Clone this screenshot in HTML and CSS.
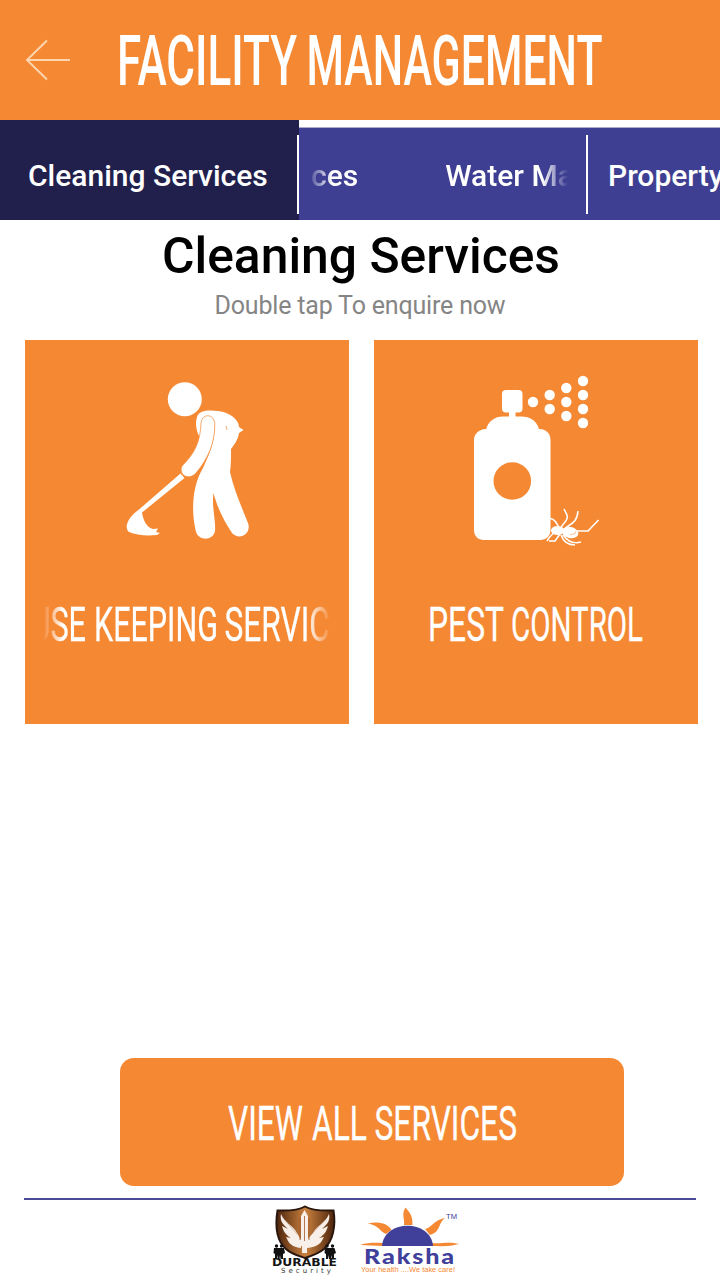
FILE: index.html
```html
<!DOCTYPE html>
<html lang="en">
<head>
  <meta charset="UTF-8">
  <meta name="viewport" content="width=device-width, initial-scale=1.0">
  <title>Facility Management</title>
  <link rel="stylesheet" href="styles.css">
</head>
<body>
  <div class="outer">

    <div class="header">
      <svg class="back" width="117" height="120" viewBox="0 0 117 120">
        <path d="M70 60H27M47 40.500L27 60L47 79.500"/>
      </svg>
      <svg class="caps title" width="603" height="120" viewBox="117 0 603 120">
        <text x="117" y="85" textLength="180" lengthAdjust="spacingAndGlyphs">FACILITY</text>
        <text x="306.500" y="85" textLength="296" lengthAdjust="spacingAndGlyphs">MANAGEMENT</text>
      </svg>
    </div>

    <div class="tabs">
      <div class="tab active">Cleaning Services</div>
      <div class="tab scrolling">
        <div class="marquee"><span>ces</span><span>Water Ma</span></div>
      </div>
      <div class="tab last">Property</div>
    </div>

    <h1 class="heading">Cleaning Services</h1>
    <p class="hint">Double tap To enquire now</p>

    <div class="cards">
      <div class="card">
        <!-- man with broom -->
        <svg width="324" height="240" viewBox="25 340 324 240" fill="#fff">
          <circle cx="184.800" cy="399.300" r="17"/>
          <path d="M197 417C199 410 209 410 218 411C230 412 239 420 239 427L243.500 430L239 433C238 440 234 445 231 449C231 458 231 465 230 472C234 490 242 508 248 523C252 534 239 541 232 533C224 521 217 507 213.500 493C211.500 506 216 521 215 531C213 541 199 541 196 532C191 512 192 486 203 468C211 451 216 438 214 421C212 415 204 415 202 421L200 438C196 431 195 423 197 417Z"/>
          <path d="M201 424C201 413 214.500 413 214.800 424C215 443 208 459 196 473C189 481 178 475 182 466C195 453 200 442 201 424Z" stroke="#f58833" stroke-width=".7"/>
          <path d="M180.500 473.500L184.500 478L142 512.500C143 520 147 528 153 529L158 528.500L156 532L160 533L157 535C146 536 136 535 129 532C124 528 127 518 139 509.500Z"/>
          <path d="M226 426L227 430" stroke="#f58833" stroke-width=".7"/>
        </svg>
        <svg class="caps fade" width="288" height="60" viewBox="43 595 288 60">
          <text x="30.500" y="641" textLength="55.500" lengthAdjust="spacingAndGlyphs">USE</text>
          <text x="94" y="641" textLength="124" lengthAdjust="spacingAndGlyphs">KEEPING</text>
          <text x="224.500" y="641" textLength="105.500" lengthAdjust="spacingAndGlyphs">SERVIC</text>
        </svg>
      </div>
      <div class="card">
        <!-- spray can and spider -->
        <svg width="324" height="240" viewBox="374 340 324 240" fill="#fff">
          <rect x="502" y="390" width="20.500" height="22.500" rx="4"/>
          <rect x="509" y="410" width="6.500" height="8"/>
          <path d="M486 430C488 421 495 416.500 503 416.500H521C530 416.500 537 421 539 429C546 429 550.500 433 550.500 440V530C550.500 536 546 540 540 540H484C478 540 474 536 474 530V440C474 434 479 429 486 429Z"/>
          <circle cx="512.300" cy="481" r="18.800" fill="#f58833"/>
          <circle cx="533" cy="402" r="5.200"/>
          <circle cx="549.700" cy="395" r="5.200"/><circle cx="549.700" cy="409" r="5.200"/>
          <circle cx="566.300" cy="388" r="5.200"/><circle cx="566.300" cy="402" r="5.200"/><circle cx="566.300" cy="416" r="5.200"/>
          <circle cx="583" cy="381" r="5.200"/><circle cx="583" cy="395" r="5.200"/><circle cx="583" cy="409" r="5.200"/><circle cx="583" cy="423" r="5.200"/>
          <ellipse cx="570" cy="532.500" rx="8.500" ry="5.500" transform="rotate(12 570 532.500)"/>
          <ellipse cx="557.500" cy="530.500" rx="6.500" ry="4.500"/>
          <path d="M561 528C563 522 569 521 567 515L564 509M565 529C568 524 577 525 578 511M574 531H588L598.500 520M559 530C558 522 554 519 549 518M558 531C553 532 550 536 547 541M560 534L555 541H549M563 535C568 542 574 544 581 542M561 535C563 541 568 545 575 545" fill="none" stroke="#fff" stroke-width="1.600"/>
          <path d="M570 535L575 533.500L576 531" fill="none" stroke="#f58833" stroke-width=".5"/>
        </svg>
        <svg class="caps" width="288" height="60" viewBox="392 595 288 60">
          <text x="428" y="641" textLength="76" lengthAdjust="spacingAndGlyphs">PEST</text>
          <text x="511" y="641" textLength="132" lengthAdjust="spacingAndGlyphs">CONTROL</text>
        </svg>
      </div>
    </div>

    <button class="all">
      <svg class="caps" width="504" height="128" viewBox="120 1058 504 128">
        <text x="228" y="1140" textLength="75" lengthAdjust="spacingAndGlyphs">VIEW</text>
        <text x="312" y="1140" textLength="55" lengthAdjust="spacingAndGlyphs">ALL</text>
        <text x="374.500" y="1140" textLength="142.500" lengthAdjust="spacingAndGlyphs">SERVICES</text>
      </svg>
    </button>

    <div class="footer">
      <svg width="72" height="76" viewBox="268 1202 72 76">
        <defs>
          <linearGradient id="shield">
            <stop offset="0" stop-color="#4d240c"/>
            <stop offset=".5" stop-color="#c9813f"/>
            <stop offset="1" stop-color="#4d240c"/>
          </linearGradient>
        </defs>
        <path d="M305 1206.500C311 1210 321 1211 333.500 1210.500C336 1226 333 1241 324 1249C318 1254 311 1256 305 1258C299 1256 291 1254 286 1249C277 1241 275 1226 277.500 1210.500C290 1211 299 1210 305 1206.500Z" fill="url(#shield)" stroke="#29170f" stroke-width="2"/>
        <g fill="#f7efe8">
          <path d="M281 1214C285 1224 293 1225 297 1233L301 1240V1248C289 1247 288 1240 286 1237L291 1238C284 1234 283 1229 282 1226L288 1229C281 1223 280 1219 281 1214Z"/>
          <path d="M329 1214C325 1224 317 1225 313 1233L307 1240V1248C321 1247 322 1240 324 1237L319 1238C326 1234 327 1229 328 1226L322 1229C329 1223 330 1219 329 1214Z"/>
          <path d="M304.500 1210L308 1216V1242H315L312 1246H307V1253H302V1246H297L294 1242H301V1216Z"/>
        </g>
        <path d="M304.500 1216V1241M300 1218V1240M309 1218V1240" stroke="#a0592d" stroke-width=".8"/>
        <path d="M285 1220L297 1234M325 1220L312 1234" stroke="#c79b7c" stroke-width=".6"/>
        <!-- guards on both sides -->
        <g fill="#111">
          <circle cx="276.500" cy="1246" r="1.700"/><circle cx="281.500" cy="1246" r="1.700"/>
          <path d="M274 1248H284L285 1253L283 1254V1259H280.500L280 1255L279.500 1259H278L277.500 1255L277 1259H275V1254L273.500 1253Z"/>
          <circle cx="327" cy="1246" r="1.700"/><circle cx="332.500" cy="1246" r="1.700"/>
          <path d="M325 1248H334.500L336 1253L334 1254V1259H332L331.500 1255L331 1259H329L328.500 1255L328 1259H326V1254L324.500 1253Z"/>
        </g>
        <text class="durable" x="272" y="1266" textLength="65" lengthAdjust="spacingAndGlyphs">DURABLE</text>
        <text class="security" x="281" y="1272.500" textLength="50">Security</text>
      </svg>
      <svg width="104" height="76" viewBox="356 1202 104 76">
        <g fill="#f58833">
          <path d="M404 1225C405 1218 401 1215 405.500 1207.500C408 1211 413 1214 412.500 1225Z"/>
          <path d="M386 1234C379 1231 380 1226 368 1223.500C377 1221 388 1223 391.500 1230Z"/>
          <path d="M425 1229C432 1228 432 1221 445 1218C438 1223 441 1232 430 1235Z"/>
          <path d="M360 1245C369 1242 377 1243 383 1243V1246ZM432 1243C442 1244 448 1241 459 1244C449 1247 440 1246 432 1246Z"/>
        </g>
        <path d="M382 1246C384 1219 431 1219 433 1246Z" fill="#40409b"/>
        <text class="tm" x="446" y="1219" textLength="11" lengthAdjust="spacingAndGlyphs">TM</text>
        <text class="raksha" x="364" y="1263.500" textLength="92" lengthAdjust="spacingAndGlyphs">Raksha</text>
        <text class="slogan" x="361" y="1272" textLength="94" lengthAdjust="spacingAndGlyphs">Your health ....We take care!</text>
      </svg>
    </div>

  </div>
</body>
</html>
```
FILE: styles.css
```css
*{
  box-sizing: border-box;
}

body{
  margin: 0;
  background-color: white;
  font-family: Roboto, sans-serif;
}

.outer{
  display: flex;
  flex-direction: column;
  width: 720px;
  height: 1280px;
  overflow: hidden;
}

svg{
  display: block;
}

.header{
  display: flex;
  height: 120px;
  flex-shrink: 0;
  background-color: #f58833;
}

.back{
  fill: none;
  stroke: #ffd5ae;
  stroke-width: 2;
}

/* tall narrow capitals */
.caps{
  fill: white;
  stroke: white;
  stroke-width: .3px;
  font-family: Roboto, sans-serif;
  font-size: 49px;
  font-weight: 400;
  overflow: visible;
}

.title{
  stroke: none;
  font-size: 70.500px;
  font-weight: 500;
}

.tabs{
  display: flex;
  align-items: flex-end;
  height: 100px;
  flex-shrink: 0;
  overflow: hidden;
  color: white;
  font-size: 30px;
  font-weight: 500;
  white-space: nowrap;
}

.tab{
  height: 93px;
  line-height: 95px;
  flex-shrink: 0;
  background: #3e3f92;
  border-top: 1px solid #aaaad0;
}

.active{
  width: 299px;
  height: 100px;
  padding-left: 28px;
  border-top: 0;
  line-height: 111px;
  background: linear-gradient(white, white) 297px 15px / 2px 79px no-repeat #21204d;
}

.scrolling{
  width: 289px;
  padding-left: 9px;
  background: linear-gradient(white, white) 287px 7px / 2px 79px no-repeat #3e3f92;
}

.marquee{
  display: flex;
  gap: 87px;
  width: 260px;
  padding-left: 3px;
  overflow: hidden;
  -webkit-mask-image: linear-gradient(to right, transparent, #000 24px, #000 234px, transparent);
  mask-image: linear-gradient(to right, transparent, #000 24px, #000 234px, transparent);
}

.last{
  width: 132px;
  padding-left: 20px;
}

.heading{
  margin: 6px 0 0 2px;
  color: black;
  font-size: 49.800px;
  line-height: 60px;
  font-weight: 500;
  text-align: center;
}

.hint{
  margin: 4px 0 0;
  color: #858585;
  font-size: 25px;
  line-height: 31px;
  letter-spacing: -.18px;
  text-align: center;
}

.cards{
  display: flex;
  gap: 25px;
  margin: 19px 0 0 25px;
}

.card{
  display: flex;
  flex-direction: column;
  align-items: center;
  gap: 15px;
  width: 324px;
  height: 384px;
  background-color: #f58833;
}

.fade{
  overflow: hidden;
  -webkit-mask-image: linear-gradient(to right, transparent, #000 20px, #000 264px, transparent);
  mask-image: linear-gradient(to right, transparent, #000 20px, #000 264px, transparent);
}

.all{
  width: 504px;
  height: 128px;
  margin: auto 0 12px 120px;
  padding: 0;
  border: 0;
  border-radius: 14px;
  background-color: #f58833;
}

.footer{
  display: flex;
  gap: 16px;
  height: 82px;
  margin: 0 24px;
  padding: 2px 0 0 244px;
  border-top: 2px solid #4b4b98;
}

.durable{
  fill: #151515;
  font-family: "DejaVu Sans", sans-serif;
  font-size: 11px;
  font-weight: bold;
}

.security{
  fill: #333;
  font-family: "DejaVu Sans", sans-serif;
  font-size: 7px;
}

.tm{
  fill: #40409b;
  font-family: "Liberation Sans", sans-serif;
  font-size: 8px;
}

.raksha{
  fill: #40409b;
  font-family: Lato, sans-serif;
  font-size: 20px;
  font-weight: 900;
  letter-spacing: 1.500px;
}

.slogan{
  fill: #f58833;
  font-family: "Liberation Sans", sans-serif;
  font-size: 7px;
}
```
